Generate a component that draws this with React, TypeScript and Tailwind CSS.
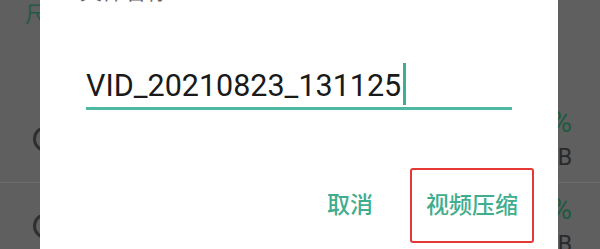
import React from "react";

const font = { fontFamily: 'Roboto, "Noto Sans CJK SC", sans-serif' };

function ListRow({ pct, size }: { pct: string; size: string }) {
  return (
    <div className="flex h-[87px] items-center justify-between border-b border-[#6b6b6b] pl-[33px] pr-[28px]">
      <div className="h-[26px] w-[26px] rounded-full border-[3px] border-[#2f2f2f]" />
      <div className="flex flex-col items-end gap-[6px]">
        <span className="text-[29px] leading-[32px] text-[#1d5a40]">{pct}</span>
        <span className="text-[23px] leading-[28px] text-[#2a2a2a]">{size}</span>
      </div>
    </div>
  );
}

export default function App() {
  return (
    <div
      className="relative h-[249px] w-[600px] overflow-hidden bg-[#5f5f5f]"
      style={font}
    >
      {/* dimmed list behind the dialog */}
      <div className="flex flex-col">
        <div className="h-[96px] pl-[25px] pt-[1px] text-[22px] leading-[28px] text-[#245a45]">
          尺寸
        </div>
        <ListRow pct="100%" size="12.6 MB" />
        <ListRow pct="100%" size="8.3 MB" />
      </div>

      {/* dialog */}
      <div className="absolute left-[40px] top-0 h-[280px] w-[518px] bg-white">
        <div className="-mt-[21px] pl-[40px] text-[22px] leading-[26px] text-[#666]">
          文件名称
        </div>

        <div className="mt-[58px] px-[46px]">
          <div className="flex items-end border-b-[3px] border-[#4fb8a3] pb-[2px]">
            <span className="mb-[1px] text-[30.5px] leading-[36px] text-[#1a1a1a]">
              VID_20210823_131125
            </span>
            <span className="ml-[2px] h-[42px] w-[3px] bg-[#3fae95]" />
          </div>
        </div>

        <div className="mt-[58px] flex items-center justify-end pr-[24px] text-[23px] font-medium leading-[30px] text-[#40ad8e]">
          <span>取消</span>
          <div className="ml-[37px] flex h-[75px] w-[124px] items-center justify-center rounded-[3px] border-2 border-[#e53935]">
            视频压缩
          </div>
        </div>
      </div>
    </div>
  );
}
